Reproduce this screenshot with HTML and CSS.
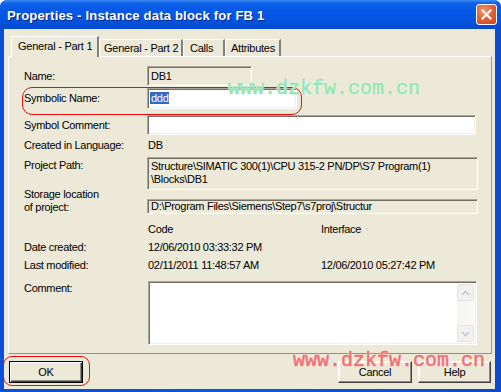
FILE: index.html
```html
<!DOCTYPE html>
<html>
<head>
<meta charset="utf-8">
<link rel="stylesheet" href="styles.css">
</head>
<body>
<div class="window">
  <div class="titlebar">
    <span class="title">Properties - Instance data block for FB 1</span>
    <span class="close"><svg width="11" height="11" viewBox="0 0 11 11"><path d="M1.5 1.5 L9.5 9.5 M9.5 1.5 L1.5 9.5" stroke="#fff" stroke-width="2.2" stroke-linecap="square"/></svg></span>
  </div>
  <div class="body">
    <div class="tabs">
      <div class="tab active">General - Part 1</div>
      <div class="tab t2">General - Part 2</div>
      <div class="tab t3">Calls</div>
      <div class="tab t4">Attributes</div>
    </div>
    <div class="panel">
      <div class="row r1">
        <span class="label">Name:</span>
        <span class="field disabled f-name">DB1</span>
      </div>
      <div class="row r2">
        <span class="label">Symbolic Name:</span>
        <span class="field f-sym"><span class="sel">ddd</span></span>
      </div>
      <div class="row r3">
        <span class="label">Symbol Comment:</span>
        <span class="field f-wide"></span>
      </div>
      <div class="row r4">
        <span class="label">Created in Language:</span>
        <span class="value">DB</span>
      </div>
      <div class="row r5">
        <span class="label top">Project Path:</span>
        <span class="field disabled f-path">Structure\SIMATIC 300(1)\CPU 315-2 PN/DP\S7 Program(1)<br>\Blocks\DB1</span>
      </div>
      <div class="row r6">
        <span class="label two">Storage location<br>of project:</span>
        <span class="field disabled f-store">D:\Program Files\Siemens\Step7\s7proj\Structur</span>
      </div>
      <div class="row three r7">
        <span class="label"></span>
        <span class="value">Code</span>
        <span class="value">Interface</span>
      </div>
      <div class="row three r8">
        <span class="label">Date created:</span>
        <span class="value">12/06/2010 03:33:32 PM</span>
        <span class="value"></span>
      </div>
      <div class="row three r9">
        <span class="label">Last modified:</span>
        <span class="value">02/11/2011 11:48:57 AM</span>
        <span class="value">12/06/2010 05:27:42 PM</span>
      </div>
      <div class="row r10">
        <span class="label top">Comment:</span>
        <div class="field textarea">
          <div class="scrollbar">
            <span class="sbtn"><svg width="9" height="6" viewBox="0 0 9 6"><path d="M1 5 L4.5 1.5 L8 5" fill="none" stroke="#c3c7d3" stroke-width="1.6"/></svg></span>
            <span class="track"></span>
            <span class="sbtn"><svg width="9" height="6" viewBox="0 0 9 6"><path d="M1 1 L4.5 4.5 L8 1" fill="none" stroke="#c3c7d3" stroke-width="1.6"/></svg></span>
          </div>
        </div>
      </div>
    </div>
    <div class="buttons">
      <button class="btn default">OK</button>
      <span class="spacer"></span>
      <button class="btn">Cancel</button>
      <button class="btn help">Help</button>
    </div>
  </div>

  <span class="mark mark-tab"></span>
  <span class="mark mark-sym"></span>
  <span class="mark mark-ok"></span>
  <span class="wm wm-green">www.dzkfw.com.cn</span>
  <span class="wm wm-red">www.dzkfw.com.cn</span>
</div>
</body>
</html>
```

FILE: styles.css
```css
* { box-sizing: border-box; }

body {
  margin: 0;
  background: #ffffff;
  font-family: "Liberation Sans", Arial, sans-serif;
  font-size: 11px;
  color: #000;
}

.window {
  position: relative;
  width: 501px;
  height: 392px;
  background: linear-gradient(to right, #0b4fd6 0, #0a58e2 50%, #0a4cd0 100%);
  border-radius: 7px 7px 0 0;
  display: flex;
  flex-direction: column;
  overflow: hidden;
}

.titlebar {
  height: 29px;
  flex: none;
  display: flex;
  align-items: center;
  padding: 0 4px 0 7px;
  background: linear-gradient(to bottom, #3d8ef5 0, #0f63e8 3px, #0558e6 10px, #0454e0 20px, #0349cc 29px);
}

.title {
  flex: 1;
  color: #fff;
  font-weight: bold;
  font-size: 13px;
  letter-spacing: 0.2px;
  text-shadow: 1px 1px 0 #0a2a8a;
  padding-top: 1px;
}

.close {
  width: 21px;
  height: 21px;
  border: 1px solid #fff;
  border-radius: 3px;
  background: radial-gradient(circle at 35% 30%, #f1946f 0, #e0613a 50%, #c8421e 100%);
  display: flex;
  align-items: center;
  justify-content: center;
}

.body {
  flex: 1;
  margin: 0 6px 3px 4px;
  background: #ece9d8;
  display: flex;
  flex-direction: column;
}

.tabs {
  height: 27px;
  flex: none;
  display: flex;
  align-items: flex-end;
  padding-left: 7px;
}

.tab {
  height: 17px;
  line-height: 16px;
  padding: 0 5px 0 5px;
  border-top: 1px solid #fff;
  border-left: 1px solid #fff;
  border-right: 2px solid;
  border-right-color: #808080;
  letter-spacing: -0.25px;
  white-space: nowrap;
}
.tab.t2 { width: 84px; padding-left: 4px; }
.tab.t3 { width: 42px; padding-left: 6px; }
.tab.t4 { width: 56px; padding-left: 5px; }

.tab.active {
  position: relative;
  z-index: 1;
  width: 88px;
  height: 21px;
  margin-bottom: -1px;
  line-height: 18px;
  padding-left: 6px;
  background: #ece9d8;
}

.panel {
  flex: none;
  height: 298px;
  margin: 0 3px 0 4px;
  border: 1px solid;
  border-color: #fff #9b9b9b #8e8e8e #fff;
  padding: 9px 0 0 15px;
  display: flex;
  flex-direction: column;
}

.row {
  display: grid;
  grid-template-columns: 123px auto;
  justify-content: start;
  align-items: center;
  letter-spacing: -0.3px;
  line-height: 13px;
}
.row.three { grid-template-columns: 123px 173px auto; }

.r1 { height: 20px; }
.r2 { height: 21px; margin-top: 2px; }
.r3 { height: 20px; margin-top: 6px; }
.r4 { height: 16px; margin-top: 2px; }
.r5 { height: 33px; margin-top: 4px; align-items: start; }
.r6 { height: 24px; align-items: start; }
.r7 { height: 16px; margin-top: 7px; }
.r8 { height: 16px; margin-top: 2px; }
.r9 { height: 16px; margin-top: 2px; }
.r10 { height: 64px; margin-top: 8px; align-items: start; }

.label.top { padding-top: 2px; }
.label.two { margin-top: -2px; }
.r10 .label.top { padding-top: 1px; }

.value { padding-left: 1px; }

.field {
  display: block;
  border: 1px solid;
  border-color: #aca899 #fff #fff #aca899;
  box-shadow: inset 1px 1px 0 #716f64, inset -1px -1px 0 #f1efe2;
  background: #fff;
  padding: 0 3px;
}
.field.disabled { background: #ece9d8; }

.f-name { width: 105px; height: 20px; line-height: 18px; }
.f-sym { width: 150px; height: 21px; padding: 3px 1px 0 2px; }
.f-wide { width: 329px; height: 20px; }
.f-path { width: 331px; height: 33px; padding: 2px 3px; }
.f-store { width: 331px; height: 15px; margin-top: 9px; line-height: 13px; }

.sel {
  background: #316ac5;
  color: #fff;
  padding: 0 1px;
}

.textarea {
  width: 329px;
  height: 64px;
  margin-left: 1px;
  padding: 2px;
  display: flex;
  justify-content: flex-end;
}

.scrollbar {
  width: 17px;
  height: 100%;
  display: flex;
  flex-direction: column;
  background: linear-gradient(to right, #f4f3ee, #fbfaf6);
}
.sbtn {
  height: 17px;
  flex: none;
  border: 1px solid #e2e4ea;
  border-radius: 2px;
  background: #f1f1ee;
  display: flex;
  align-items: center;
  justify-content: center;
}
.track { flex: 1; }

.buttons {
  display: flex;
  margin-top: 7px;
  padding: 0 4px 0 5px;
  gap: 6px;
}
.spacer { flex: 1; }

.btn {
  width: 74px;
  height: 22px;
  padding: 0;
  font-family: "Liberation Sans", Arial, sans-serif;
  font-size: 11px;
  letter-spacing: -0.3px;
  color: #000;
  background: #ece9d8;
  border: 1px solid;
  border-color: #fff #404040 #404040 #fff;
  box-shadow: inset -1px -1px 0 #8e8c82, inset 1px 1px 0 #f6f5ef;
}
.btn.help { width: 73px; }
.btn.default {
  border: 1px solid #000;
  box-shadow: inset 1px 1px 0 #fff, inset -1px -1px 0 #404040, inset -2px -2px 0 #8e8c82;
}

.mark {
  position: absolute;
  border: 1px solid #e40e0e;
  pointer-events: none;
}
.mark-tab { left: 11px; top: 37px; width: 88px; height: 18px; border-radius: 9px; }
.mark-sym { left: 22px; top: 87px; width: 280px; height: 28px; border-radius: 10px; }
.mark-ok { left: 3px; top: 356px; width: 87px; height: 30px; border-radius: 9px; }

.wm {
  position: absolute;
  font-family: "Liberation Mono", "Courier New", monospace;
  font-size: 20px;
  line-height: 14px;
  white-space: nowrap;
  pointer-events: none;
  -webkit-text-stroke: 0.6px currentColor;
}
.wm-green {
  left: 228px;
  top: 82px;
  color: #94e6b6;
  text-shadow: 0 0 2px #fff, 0 0 1px #fff;
}
.wm-red {
  left: 293px;
  top: 354px;
  color: #ef7272;
  text-shadow: 0 0 2px #fff, 0 0 1px #fff;
}
```
